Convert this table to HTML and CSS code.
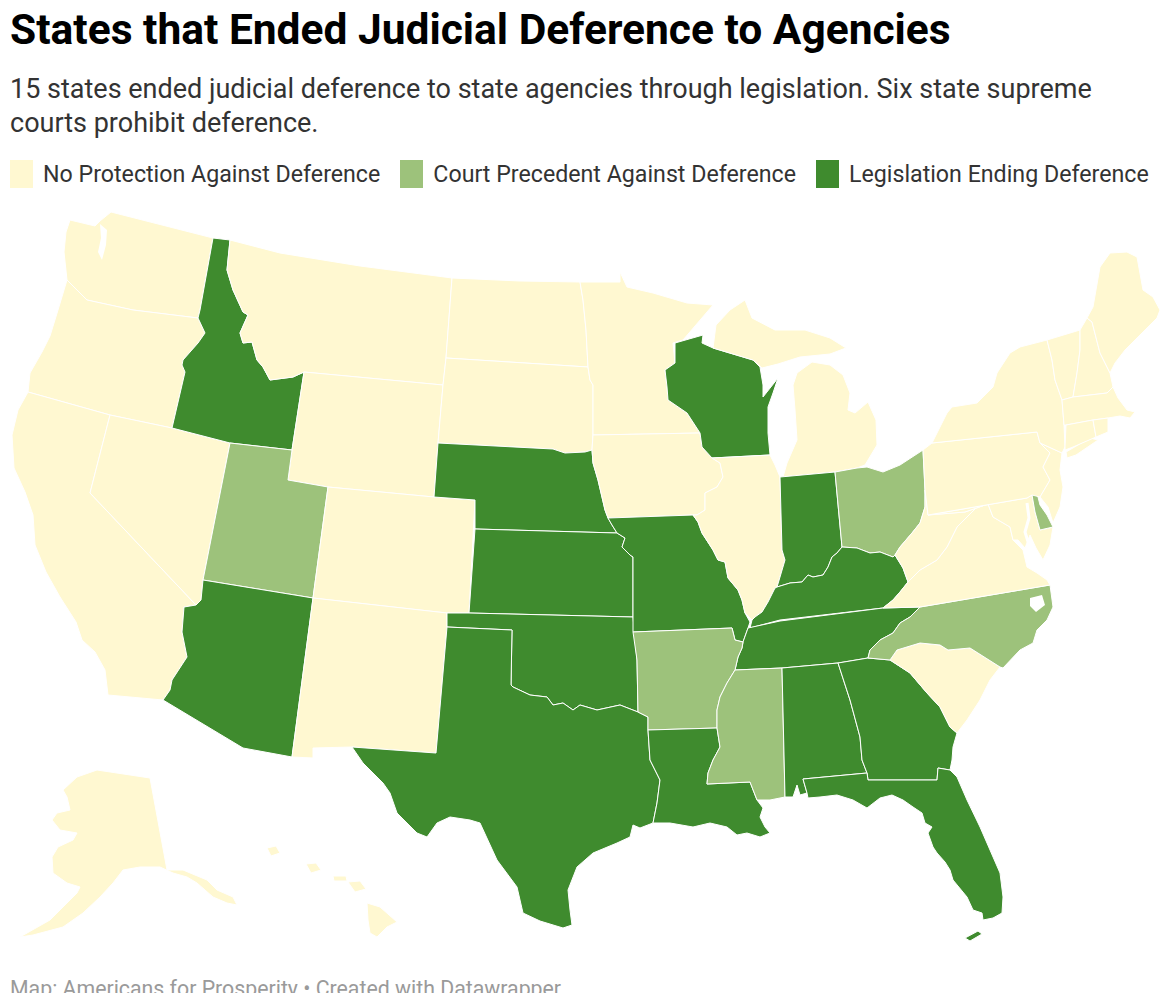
FILE: index.html
```html
<!DOCTYPE html>
<html lang="en">
<head>
<meta charset="utf-8">
<title>States that Ended Judicial Deference to Agencies</title>
<link rel="stylesheet" href="styles.css">
</head>
<body>
<div class="chart">
  <header class="head">
    <h1 class="title">States that Ended Judicial Deference to Agencies</h1>
    <p class="desc">15 states ended judicial deference to state agencies through legislation. Six state supreme<br>courts prohibit deference.</p>
    <ul class="legend">
      <li class="item"><span class="sw c0"></span>No Protection Against Deference</li>
      <li class="item"><span class="sw c1"></span>Court Precedent Against Deference</li>
      <li class="item"><span class="sw c2"></span>Legislation Ending Deference</li>
    </ul>
  </header>
  <svg class="map" viewBox="0 200 1160 775" xmlns="http://www.w3.org/2000/svg">
    <g class="states">
      <polygon class="c0" points="70,220 95,226 100,221 111,212 213,238 200,310 198,318 133,310 87,300 67,280 64,252 66,232"/>
      <polygon class="c0" points="67,280 87,300 133,310 198,318 205,333 198,343 183,360 185,372 172,428 110,415 28,392 30,373 42,352 50,336 58,310"/>
      <polygon class="c0" points="28,392 110,415 90,493 196,605 184,607 182,632 187,657 172,680 170,690 163,700 108,695 105,670 95,652 82,640 76,622 60,597 46,572 35,545 33,515 25,492 14,468 12,435 18,410"/>
      <polygon class="c0" points="110,415 172,428 230,443 203,580 201,600 196,605 90,493"/>
      <polygon class="c2" points="213,238 230,240 227,270 233,290 243,312 248,315 240,333 243,343 252,342 257,360 263,367 270,380 293,377 304,372 292,450 230,443 172,428 185,372 182,365 183,360 198,343 205,333 198,318 200,310"/>
      <polygon class="c0" points="230,240 280,253 360,266 452,278 446,358 443,385 304,372 293,377 270,380 263,367 257,360 252,342 243,343 240,333 248,315 243,312 233,290 227,270"/>
      <polygon class="c0" points="304,372 443,385 438,443 434,497 328,487 288,480 292,450"/>
      <polygon class="c1" points="230,443 292,450 288,480 328,487 313,598 203,580"/>
      <polygon class="c2" points="203,580 313,598 292,757 243,748 163,700 170,690 172,680 187,657 182,632 184,607 196,605 201,600"/>
      <polygon class="c0" points="328,487 434,497 475,500 469,613 447,613 313,598"/>
      <polygon class="c0" points="313,598 447,613 447,627 436,753 352,747 313,748 313,758 292,757"/>
      <polygon class="c0" points="452,278 520,281 580,282 583,300 586,330 588,367 446,358"/>
      <polygon class="c0" points="446,358 588,367 590,380 593,385 593,433 592,450 585,452 565,453 553,449 438,443 443,385"/>
      <polygon class="c2" points="438,443 553,449 565,453 585,452 592,450 593,463 598,480 605,510 608,518 612,525 617,533 475,529 475,500 434,497"/>
      <polygon class="c2" points="475,529 617,533 625,538 622,547 630,555 633,557 633,617 469,613"/>
      <polygon class="c2" points="447,613 469,613 633,617 637,660 638,712 620,705 597,710 580,705 573,710 563,703 553,705 547,697 530,695 513,687 511,685 512,630 447,627"/>
      <polygon class="c2" points="447,627 512,630 511,685 513,687 530,695 547,697 553,705 563,703 573,710 580,705 597,710 620,705 638,712 648,717 648,730 650,760 660,780 657,803 653,823 640,828 633,825 630,837 617,843 593,853 577,867 568,890 570,910 572,925 563,928 540,921 523,913 517,887 497,860 480,823 470,820 450,817 437,823 427,837 417,833 397,813 390,793 383,783 363,763 352,747 436,753"/>
      <polygon class="c0" points="580,282 620,282 620,272 627,287 653,293 687,303 713,305 683,340 673,343 675,363 665,370 667,387 668,400 687,413 700,433 593,435 593,385 590,380 588,367 586,330 583,300"/>
      <polygon class="c0" points="593,435 700,433 702,447 712,458 720,463 723,477 717,487 705,493 705,510 697,515 693,515 608,518 605,510 598,480 593,463 592,450"/>
      <polygon class="c2" points="608,518 693,515 698,522 702,533 713,550 718,560 725,562 728,578 738,590 742,600 745,613 750,622 748,628 743,642 735,640 732,628 633,632 633,617 633,557 630,555 622,547 625,538 617,533 612,525"/>
      <polygon class="c2" points="675,343 703,335 702,343 713,348 753,360 760,367 763,385 763,397 778,378 773,393 768,407 768,433 770,455 712,458 702,447 700,433 687,413 668,400 667,387 665,370 675,363"/>
      <polygon class="c0" points="713,348 716,325 730,310 745,300 752,318 775,330 805,330 830,338 846,348 830,354 800,357 778,364 762,368 753,360"/>
      <polygon class="c0" points="797,373 812,362 830,365 843,375 850,393 848,410 855,413 868,402 876,420 877,445 865,465 857,468 835,472 783,477 787,463 797,440 795,410 793,385"/>
      <polygon class="c0" points="712,458 770,455 775,465 780,477 782,550 785,560 780,577 777,587 775,588 768,602 762,612 755,617 752,620 745,613 742,600 738,590 728,578 725,562 718,560 713,550 702,533 698,522 693,515 697,515 705,510 705,493 717,487 723,477 720,463"/>
      <polygon class="c2" points="780,477 835,472 842,547 837,553 832,557 828,567 823,575 813,577 808,575 802,582 790,583 777,587 780,577 785,560 782,550"/>
      <polygon class="c1" points="835,472 857,468 867,467 883,472 900,465 923,450 925,490 925,507 920,523 912,533 900,547 895,555 893,557 880,552 870,553 857,548 842,547"/>
      <polygon class="c2" points="777,587 790,583 802,582 808,575 813,577 823,575 828,567 832,557 837,553 842,547 857,548 870,553 880,552 893,557 895,555 903,568 908,582 900,592 893,600 883,608 780,620 750,628 752,620 755,617 762,612 768,602 775,588"/>
      <polygon class="c2" points="748,628 780,621 883,608 920,607 910,617 900,623 893,633 880,640 870,650 868,658 838,663 782,668 735,670 738,657 742,648 743,642"/>
      <polygon class="c1" points="633,632 732,628 735,640 743,642 742,648 738,657 735,670 727,683 720,697 717,710 717,728 648,730 648,717 638,712 637,660"/>
      <polygon class="c2" points="648,730 717,728 720,747 713,760 708,773 707,784 750,782 757,800 763,808 760,817 765,827 770,833 760,837 747,833 737,835 727,827 710,823 693,827 670,823 653,823 657,803 660,780 650,760"/>
      <polygon class="c1" points="735,670 782,668 785,797 770,800 757,800 750,782 707,784 708,773 713,760 720,747 717,728 717,710 720,697 727,683"/>
      <polygon class="c2" points="782,668 838,663 850,700 860,737 862,760 867,773 803,779 807,793 800,795 797,785 793,797 785,797"/>
      <polygon class="c2" points="838,663 868,658 890,660 910,673 927,693 940,707 950,727 957,733 953,747 952,760 950,770 938,768 937,780 868,780 867,773 862,760 860,737 850,700"/>
      <polygon class="c2" points="803,779 867,773 868,780 937,780 938,768 950,770 957,777 967,800 980,827 990,850 1000,873 1003,897 1002,913 993,918 983,920 982,913 973,910 967,897 953,880 950,870 945,862 937,853 933,847 928,833 932,827 925,823 922,813 913,807 903,800 892,795 880,798 867,808 853,800 837,795 820,797 808,798 807,793"/>
      <polygon class="c2" points="965,938 978,931 982,934 970,941"/>
      <polygon class="c0" points="890,660 897,650 920,643 940,645 948,650 970,648 1000,667 990,680 980,700 967,720 957,733 950,727 940,707 927,693 910,673"/>
      <polygon class="c1" points="920,607 1050,585 1053,607 1047,620 1037,630 1033,643 1020,650 1003,668 1000,667 970,648 948,650 940,645 920,643 897,650 890,660 868,658 870,650 880,640 893,633 900,623 910,617"/>
      <polygon class="c0" points="883,608 893,600 900,592 908,582 920,570 937,560 947,547 957,527 967,517 977,507 988,504 993,517 1010,527 1013,540 1023,550 1027,567 1037,573 1047,580 1050,585 920,607"/>
      <polygon class="c0" points="895,555 900,547 912,533 920,523 925,507 925,490 928,515 965,512 988,504 977,507 967,517 957,527 947,547 937,560 920,570 908,582 903,568"/>
      <polygon class="c0" points="928,515 1027,498 1032,495 1035,512 1040,530 1053,527 1050,545 1043,560 1036,548 1030,535 1025,548 1018,540 1013,540 1010,527 993,517 988,504 965,512"/>
      <polygon class="c1" points="1032,495 1037,493 1040,505 1047,515 1053,527 1040,530 1035,512"/>
      <polygon class="c0" points="923,450 932,443 1037,432 1040,443 1050,453 1043,467 1050,480 1040,497 1032,495 1027,498 928,515 925,490"/>
      <polygon class="c0" points="1040,443 1062,453 1060,470 1063,487 1060,507 1053,523 1048,507 1040,497 1050,480 1043,467 1050,453"/>
      <polygon class="c0" points="932,443 947,413 952,407 977,403 993,387 997,373 1010,353 1020,347 1047,340 1052,360 1055,380 1062,400 1064,425 1065,447 1062,453 1040,443 1037,432"/>
      <polygon class="c0" points="1066,452 1090,438 1098,440 1076,455 1067,458"/>
      <polygon class="c0" points="1047,340 1080,330 1080,350 1077,373 1073,397 1062,400 1055,380 1052,360"/>
      <polygon class="c0" points="1080,330 1087,318 1092,322 1100,353 1110,373 1113,387 1107,393 1073,397 1077,373 1080,350"/>
      <polygon class="c0" points="1087,318 1093,307 1100,267 1110,253 1127,252 1137,257 1143,290 1153,297 1160,310 1157,318 1140,335 1125,350 1115,363 1110,373 1100,353 1092,322"/>
      <polygon class="c0" points="1062,400 1073,397 1107,393 1113,387 1118,398 1127,410 1135,412 1130,418 1120,416 1108,418 1093,420 1066,425 1064,425"/>
      <polygon class="c0" points="1066,425 1093,420 1096,437 1073,447 1065,450 1065,447"/>
      <polygon class="c0" points="1093,420 1108,418 1108,432 1096,437"/>
      <polygon class="c0" points="63,790 77,777 97,770 150,778 167,870 183,870 207,880 217,890 233,897 237,905 227,903 213,897 197,883 187,877 173,873 160,867 140,867 123,870 113,883 100,897 83,913 63,927 33,935 20,937 50,920 77,893 80,887 67,883 53,873 52,857 58,847 73,840 77,833 60,830 52,820 57,813 70,810 67,797"/>
      <polygon class="c0" points="267,848 276,846 280,853 271,856"/>
      <polygon class="c0" points="306,864 316,863 321,870 311,873"/>
      <polygon class="c0" points="333,876 346,876 347,881 334,881"/>
      <polygon class="c0" points="348,882 360,881 366,889 355,892"/>
      <polygon class="c0" points="367,903 380,907 397,922 387,927 377,937 370,933 368,920"/>
    </g>
    <g class="water">
      <polygon points="100,224 107,230 106,245 102,260 98,252 101,238"/>
      <polygon points="1030,598 1042,595 1045,605 1036,612 1030,606"/>
      <polyline class="bay" points="1027,503 1029,518 1025,532 1030,548 1033,568"/>
    </g>
  </svg>
  <footer class="foot">Map: Americans for Prosperity • Created with Datawrapper</footer>
</div>
</body>
</html>
```

FILE: styles.css
```css
html, body {
  margin: 0;
  padding: 0;
  background: #ffffff;
}

body {
  font-family: Roboto, "Noto Sans", "Liberation Sans", Arial, sans-serif;
  color: #333333;
}

.chart {
  width: 1160px;
  height: 993px;
  overflow: hidden;
}

.head {
  height: 200px;
  box-sizing: border-box;
  padding: 5px 10px 0;
}

.title {
  margin: 0;
  font-size: 42.5px;
  line-height: 50px;
  font-weight: 700;
  color: #000000;
}

.desc {
  margin: 17px 0 0;
  font-size: 27px;
  line-height: 34px;
  color: #333333;
}

.legend {
  list-style: none;
  margin: 20px 0 0;
  padding: 0;
  display: flex;
  gap: 20px;
  font-size: 23.2px;
  color: #333333;
}

.item {
  display: flex;
  align-items: center;
  gap: 10px;
  height: 28px;
}

.sw {
  width: 23px;
  height: 28px;
  display: block;
}

.sw.c0 { background: #fff8d1; }
.sw.c1 { background: #9dc27b; }
.sw.c2 { background: #3f8b2e; }

.map {
  display: block;
  width: 1160px;
  height: 775px;
}

.states polygon {
  stroke: #ffffff;
  stroke-width: 1;
  stroke-linejoin: round;
}

.states .c0 { fill: #fff8d1; }
.states .c1 { fill: #9dc27b; }
.states .c2 { fill: #3f8b2e; }

.water polygon {
  fill: #ffffff;
  stroke: none;
}

.water .bay {
  fill: none;
  stroke: #ffffff;
  stroke-width: 3;
  stroke-linejoin: round;
}

.foot {
  padding: 2px 10px 0;
  font-size: 21.3px;
  line-height: 24px;
  color: #9a9a9a;
}
```
